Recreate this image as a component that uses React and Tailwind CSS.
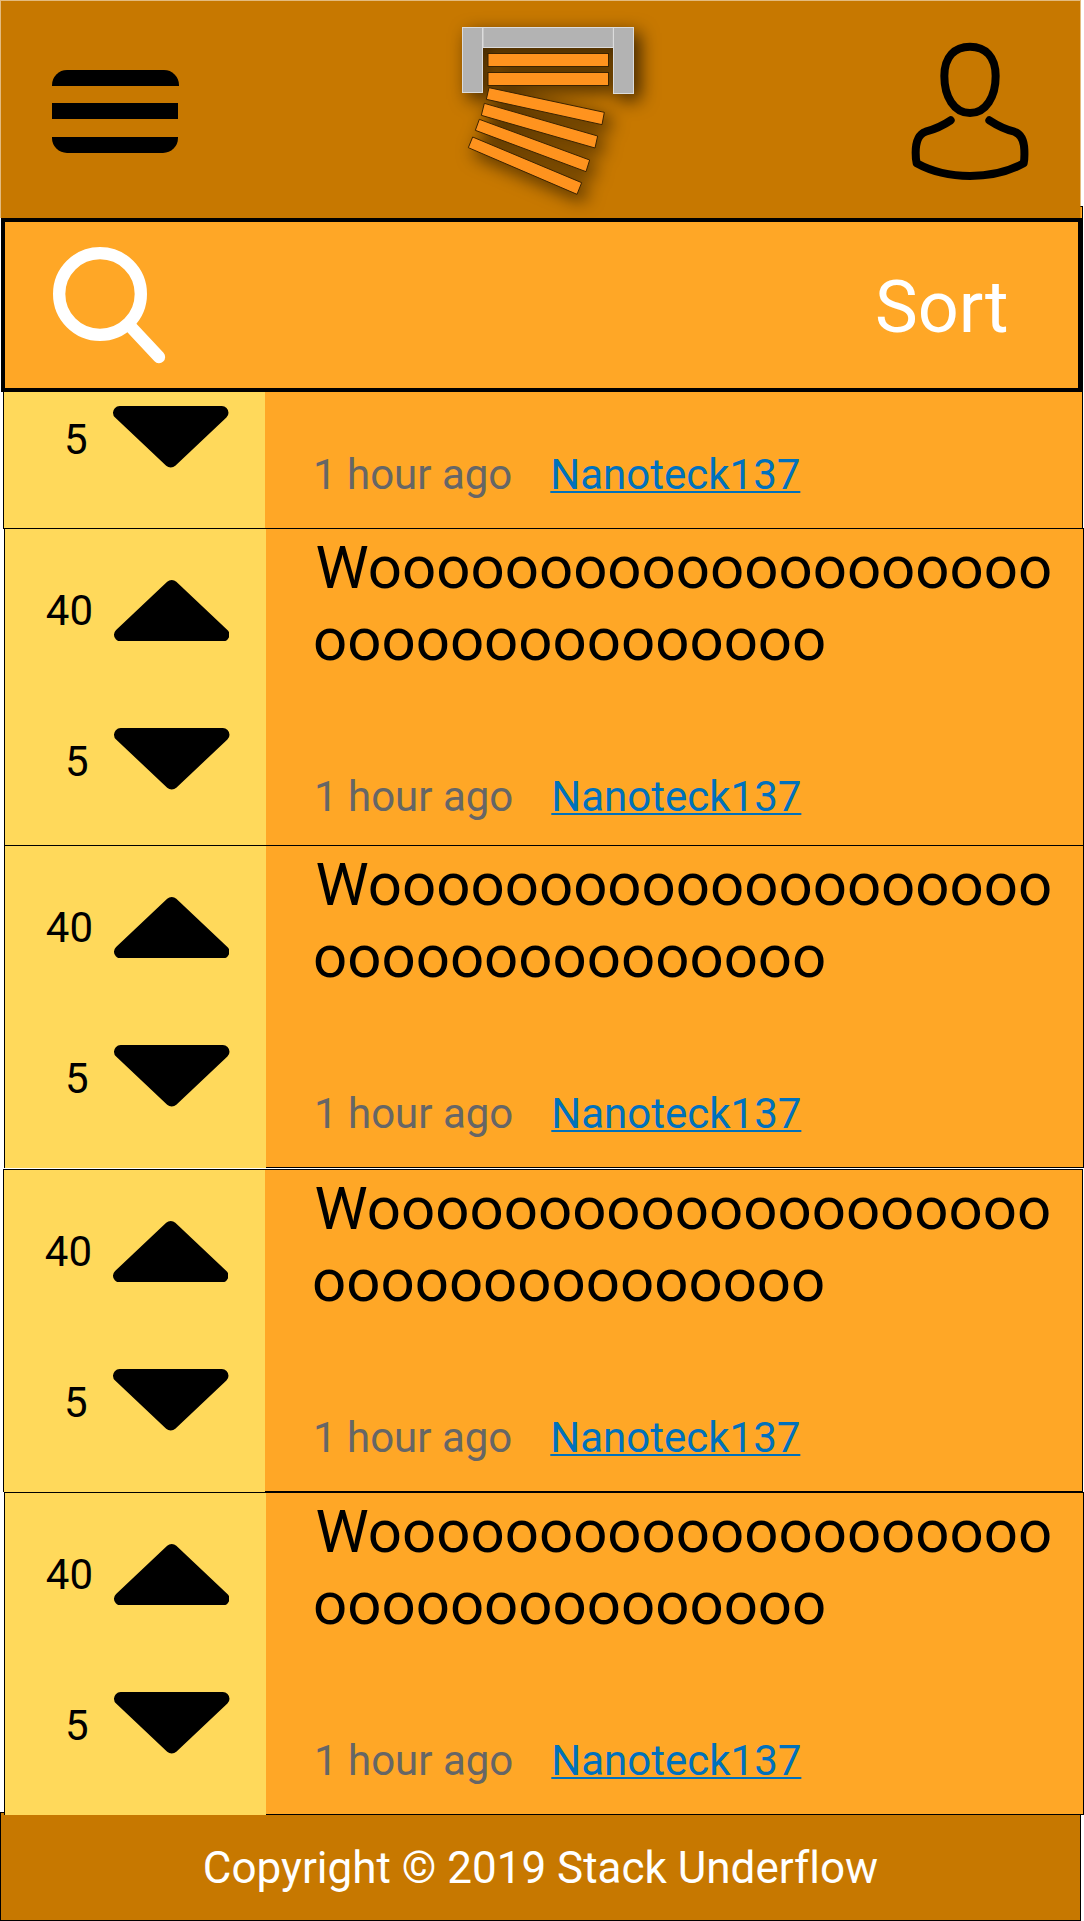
function MenuIcon() {
  return (
    <div className="ml-[51px] mt-[69px] flex w-[127px] flex-col">
      <span className="h-4 w-[127px] rounded-t-[15px] bg-black" />
      <span className="mt-[17px] h-4 w-[126px] bg-black" />
      <span className="mt-[18px] h-4 w-[126px] rounded-b-[15px] bg-black" />
    </div>
  );
}

function Logo() {
  return (
    <svg
      className="ml-[13.5px] mt-[9px] h-[208px] w-[220px] overflow-visible drop-shadow-[6px_6px_9px_rgba(0,0,0,0.7)]"
      viewBox="0 0 660 624"
    >
      <g fill="#b3b3b3" stroke="#dcdcdc" strokeWidth="3">
        <rect x="129" y="52.5" width="391" height="60" />
        <rect x="67.5" y="52.5" width="60" height="195" />
        <rect x="520.5" y="52.5" width="60" height="198" />
      </g>
      <g fill="#ff931e" stroke="#3b2300" strokeWidth="3">
        <rect x="144" y="130.5" width="361.5" height="39" />
        <rect x="144" y="187.5" width="361.5" height="39" />
        <path d="M147 233 493 307 486 344 139 268Z" />
        <path d="M133 280 473 378 465 414 124 316Z" />
        <path d="M118 328 449 450 438 485 106 361Z" />
        <path d="M98 381 425 518 411 553 85 413Z" />
      </g>
    </svg>
  );
}

function UserIcon() {
  return (
    <svg
      className="mr-12 mt-[39px] h-[144px] w-[124px]"
      viewBox="145 120 372 432"
      fill="none"
      stroke="#000"
      strokeWidth="24"
      strokeLinecap="round"
      strokeLinejoin="round"
    >
      <path d="M331 140C285 140 254 170 254 228C254 290 283 339 331 339C379 339 408 290 408 228C408 170 377 140 331 140Z" />
      <path d="M273 361C245 380 220 389 198 395C178 402 168 425 168 458Q168 478 171 490Q240 528 331 528Q422 528 492 490Q495 478 494 450C493 418 484 402 464 395C440 389 415 378 389 361" />
    </svg>
  );
}

function Header() {
  return (
    <header className="relative z-10 flex h-[218px] w-[1081px] shrink-0 items-start justify-between border border-b-0 border-[#c77800]/50 bg-[#c77800] bg-clip-padding">
      <MenuIcon />
      <Logo />
      <UserIcon />
    </header>
  );
}

function SearchBar() {
  return (
    <div className="relative z-10 ml-px flex h-[174px] w-[1081px] shrink-0 items-start justify-between border-4 border-black bg-[#ffa726] text-white">
      <svg className="ml-12 mt-[25px] h-[117px] w-[113px]" viewBox="159 141 339 351" fill="none" stroke="#fff" strokeWidth="37">
        <circle cx="300" cy="282" r="122.5" />
        <path d="M390 378 477 471" strokeLinecap="round" />
      </svg>
      <span className="mr-[69.5px] mt-[50px] text-[72px] leading-[72px]">Sort</span>
    </div>
  );
}

function Arrow({ down }) {
  return (
    <svg className="h-[61.5px] w-[115.5px]" viewBox="0 0 346 184" stroke="#000" strokeWidth="40" strokeLinejoin="round">
      <path d={down ? "M20 20H326L173 164Z" : "M20 164H326L173 20Z"} />
    </svg>
  );
}

// A card scrolled under the search bar keeps its full height but shows only its lower half.
function Card({ className, scrolled }) {
  return (
    <article className={"relative flex h-[323px] w-[1080px] shrink-0 border border-black bg-[#ffa726] " + className}>
      <div className="h-[322px] w-[261px] shrink-0 bg-[#ffd95b] text-[42px] leading-10">
        <div className="flex h-28 pt-[50.5px]">
          {!scrolled && (
            <>
              <span className="mt-[11px] w-[88px] text-right">40</span>
              <div className="ml-[20.5px]">
                <Arrow />
              </div>
            </>
          )}
        </div>
        <div className="flex pt-[87px]">
          <span className="mt-[14px] w-[83.5px] text-right">5</span>
          <div className="ml-[25.5px]">
            <Arrow down />
          </div>
        </div>
      </div>
      <div className="pl-[47px]">
        <p className="mt-[2.5px] h-36 whitespace-nowrap text-[60px] leading-[72px]">
          {!scrolled && (
            <>
              <span className="ml-[2.5px]">Woooooooooooooooooooo</span>
              <br />
              ooooooooooooooo
            </>
          )}
        </p>
        <div className="ml-px mt-[100px] flex text-[42px] leading-[42px]">
          <span className="text-[#666666]">1 hour ago</span>
          <a className="ml-[38px] text-[#0071bc] underline decoration-2 underline-offset-2">Nanoteck137</a>
        </div>
      </div>
    </article>
  );
}

export default function App() {
  return (
    <div className="flex h-[1921px] w-[1084px] flex-col overflow-hidden bg-white font-['Roboto',sans-serif] text-black">
      <Header />
      <SearchBar />
      <main className="relative z-[5] -mt-[186px] flex flex-col">
        <Card className="ml-[3px]" scrolled />
        <Card className="-mt-px ml-1" />
        <Card className="-mt-[6px] ml-1" />
        <Card className="mt-px ml-[3px]" />
        <Card className="ml-1" />
      </main>
      <footer className="-mt-[3px] h-[109px] w-[1081px] shrink-0 border border-black bg-[#c77800] pt-[33px] text-center text-[44px] leading-[44px] text-white [font-variant-ligatures:none]">
        Copyright © 2019 Stack Underflow
      </footer>
    </div>
  );
}
